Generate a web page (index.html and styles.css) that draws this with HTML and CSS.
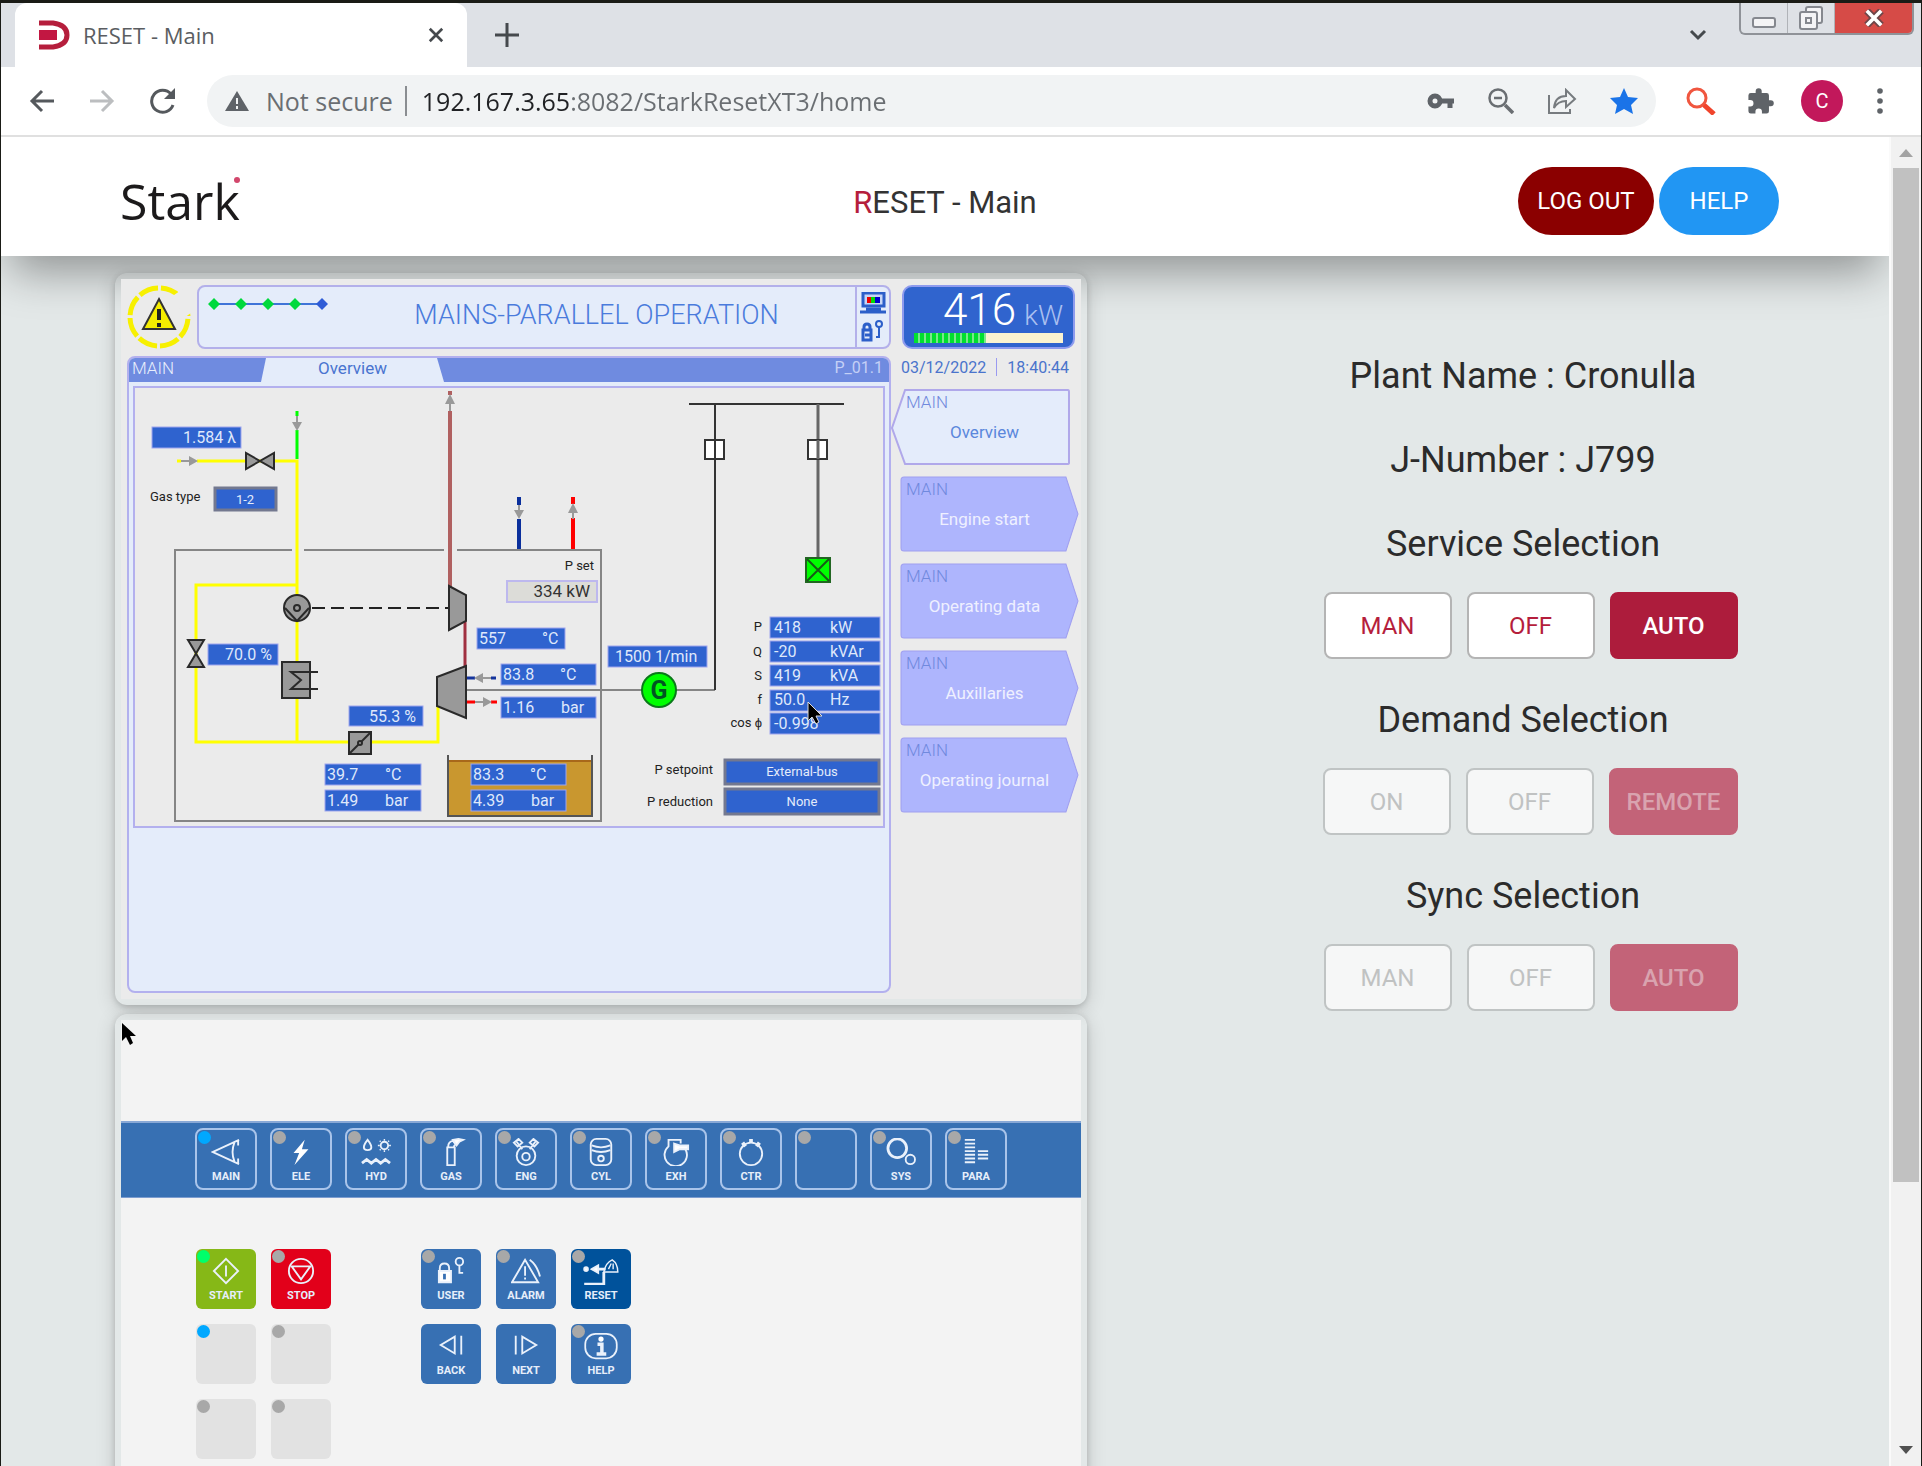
FILE: index.html
```html
<!DOCTYPE html>
<html lang="en">
<head>
<meta charset="utf-8">
<title>RESET - Main</title>
<meta name="viewport" content="width=device-width, initial-scale=1">
<link rel="stylesheet" href="styles.css">
</head>
<body>
<div class="window">
  <div class="tabstrip">
    <div class="tab">
      <svg class="favicon" width="32" height="30" viewBox="0 0 32 30"><path d="M1 3h14q14 2 14 12T15 27H1" fill="none" stroke="#b51e3c" stroke-width="5"/><path d="M1 10h18v10H1z" fill="#c21742"/></svg>
      <span class="tab-title">RESET - Main</span>
      <button class="icon-btn" aria-label="Close tab"><svg width="16" height="16" viewBox="0 0 18 18"><path d="M2 2l14 14M16 2L2 16" stroke="#45494d" stroke-width="3"/></svg></button>
    </div>
    <button class="icon-btn new-tab" aria-label="New tab"><svg width="24" height="24" viewBox="0 0 24 24"><path d="M12 0v24M0 12h24" stroke="#45494d" stroke-width="3"/></svg></button>
    <button class="icon-btn tab-search" aria-label="Search tabs"><svg width="18" height="12" viewBox="0 0 18 12"><path d="M2 2l7 7 7-7" fill="none" stroke="#45494d" stroke-width="3"/></svg></button>
    <div class="window-controls">
      <button class="wc" aria-label="Minimize"><svg class="wc-min" width="24" height="12" viewBox="0 0 24 12"><rect x="1" y="1" width="22" height="9" rx="2" fill="#f4f4f6" stroke="#85888f" stroke-width="2"/></svg></button>
      <button class="wc" aria-label="Restore"><svg width="26" height="26" viewBox="0 0 26 26" fill="#f4f4f6" stroke="#85888f" stroke-width="2"><rect x="8" y="2" width="16" height="16" rx="2"/><rect x="2" y="7" width="17" height="17" rx="2"/><rect x="8" y="13" width="5" height="5"/></svg></button>
      <button class="wc wc-close" aria-label="Close"><svg width="20" height="18" viewBox="0 0 22 20"><path d="M3 2l16 16M19 2L3 18" stroke="#6d4548" stroke-width="8"/><path d="M3 2l16 16M19 2L3 18" stroke="#fff" stroke-width="4"/></svg></button>
    </div>
  </div>
  <div class="toolbar">
    <div class="history">
      <button class="icon-btn" aria-label="Back"><svg width="26" height="24" viewBox="0 0 26 24"><path d="M25 12H3M13 2L3 12l10 10" fill="none" stroke="#55595d" stroke-width="3"/></svg></button>
      <button class="icon-btn" aria-label="Forward" disabled><svg width="26" height="24" viewBox="0 0 26 24"><path d="M1 12h22M13 2l10 10-10 10" fill="none" stroke="#bcbec0" stroke-width="3"/></svg></button>
      <button class="icon-btn" aria-label="Reload"><svg width="28" height="26" viewBox="0 0 28 26"><path d="M24 17A11 11 0 1 1 22 6" fill="none" stroke="#55595d" stroke-width="3"/><path d="M26 0v11H15z" fill="#55595d"/></svg></button>
    </div>
    <div class="omnibox">
      <svg width="24" height="20" viewBox="0 0 24 20"><path d="M12 0l12 20H0z" fill="#5f6368"/><path d="M12 7v6M12 15v3" stroke="#f1f3f4" stroke-width="2"/></svg>
      <span class="not-secure">Not secure</span>
      <input class="url" type="text" aria-label="Address" value="192.167.3.65:8082/StarkResetXT3/home">
      <svg width="28" height="16" viewBox="0 0 28 16"><circle cx="8" cy="8" r="5" fill="none" stroke="#5f6368" stroke-width="5"/><path d="M14 8h13M23 8v7" stroke="#5f6368" stroke-width="5"/></svg>
      <svg width="26" height="26" viewBox="0 0 26 26" fill="none" stroke="#6a6e72" stroke-width="2.5"><circle cx="10" cy="10" r="8.500"/><path d="M17 17l8 8" stroke-width="3.500"/><path d="M6 10h8"/></svg>
      <svg width="30" height="26" viewBox="0 0 30 26" fill="none" stroke="#777b7f" stroke-width="2"><path d="M2 7v18h21v-4"/><path d="M7 20q1-12 12-12V2l9 9-9 8v-6q-8 0-12 7z"/></svg>
      <svg width="28" height="26" viewBox="0 0 28 26"><path d="M14 0l4 9 10 1-7 7 2 9-9-5-9 5 2-9-7-7 10-1z" fill="#1a73e8"/></svg>
    </div>
    <svg width="30" height="28" viewBox="0 0 30 28" fill="none"><circle cx="11" cy="11" r="9" stroke="#f0563f" stroke-width="3"/><path d="M18 18l10 9" stroke="#f0442c" stroke-width="5"/></svg>
    <svg width="29" height="29" viewBox="0 0 24 24"><path d="M20.500 11H19V7a2 2 0 0 0-2-2h-4V3.500a2.500 2.500 0 0 0-5 0V5H4a2 2 0 0 0-2 2v3.800h1.500a2.700 2.700 0 0 1 0 5.400H2V20a2 2 0 0 0 2 2h3.800v-1.500a2.700 2.700 0 0 1 5.400 0V22H17a2 2 0 0 0 2-2v-4h1.500a2.500 2.500 0 0 0 0-5z" fill="#5f6368"/></svg>
    <button class="avatar" aria-label="Profile">C</button>
    <button class="icon-btn menu" aria-label="Menu"><svg width="6" height="26" viewBox="0 0 6 26" fill="#5f6368"><circle cx="3" cy="3" r="2.800"/><circle cx="3" cy="13" r="2.800"/><circle cx="3" cy="23" r="2.800"/></svg></button>
  </div>

  <div class="viewport">
    <div class="page">
      <header class="site-header">
        <a class="logo" href="#">Stark<i class="logo-dot"></i></a>
        <h1 class="page-title"><span class="accent">R</span>ESET - Main</h1>
        <div class="header-actions">
          <button class="pill pill-logout">LOG OUT</button>
          <button class="pill pill-help">HELP</button>
        </div>
      </header>
      <main class="content">
        <div class="left">
          <section class="card">
            <div class="hmi">
              <div class="hmi-left">
                <div class="hmi-head">
                  <svg class="alarm" width="66" height="64" viewBox="0 0 66 64"><circle cx="32" cy="32" r="29" fill="none" stroke="#f7f000" stroke-width="5" stroke-dasharray="20 3" pathLength="184" stroke-dashoffset="-2"/><path d="M50 8l14 20" stroke="#ebebeb" stroke-width="14"/><path d="M32 14l16 30H16z" fill="#f5ec00" stroke="#333" stroke-width="2"/><path d="M32 24v11M32 38v4" stroke="#222" stroke-width="4"/></svg>
                  <div class="banner">
                    <svg class="steps" width="120" height="14" viewBox="0 0 120 14"><path d="M6 7h108" stroke="#3f74d8" stroke-width="2"/><g fill="#00d93c"><path d="M0 7l6-6 6 6-6 6zM27 7l6-6 6 6-6 6zM54 7l6-6 6 6-6 6zM81 7l6-6 6 6-6 6z"/></g><path d="M108 7l6-6 6 6-6 6z" fill="#2f5cd6"/></svg>
                    <span class="banner-text">MAINS-PARALLEL OPERATION</span>
                    <div class="banner-icons">
                      <svg width="26" height="22" viewBox="0 0 26 22"><rect x="3" y="1" width="21" height="13" fill="#c7d6f6" stroke="#2c5fc9" stroke-width="3"/><path d="M7 5h4v6H7z" fill="#e00"/><path d="M11 5h4v6h-4z" fill="#0d0"/><path d="M15 5h5v6h-5z" fill="#00c"/><path d="M0 20h26M6 17h15" stroke="#2c5fc9" stroke-width="3"/></svg>
                      <svg width="24" height="22" viewBox="0 0 24 22" fill="none" stroke="#2c5fc9" stroke-width="3"><path d="M3 10V7q0-3 3-3t3 3v3"/><path d="M2 10h8v10H2zM4 15h5"/><circle cx="18" cy="4" r="3" stroke-width="2"/><path d="M18 7v11M18 17h-3" stroke-width="2"/></svg>
                    </div>
                  </div>
                </div>
                <div class="frame">
                  <div class="frame-tabs">
                    <span class="frame-main">MAIN</span>
                    <span class="frame-tab">Overview</span>
                    <span class="frame-code">P_01.1</span>
                  </div>
                  <div class="diagram">
                  <svg viewBox="136 388 748 438" role="img" aria-label="Plant overview">
                    <g fill="none" stroke="#858585" stroke-width="2"><path d="M293 550H176V821H602V550H458M445 550H305"/><path d="M467 690H716"/></g>
                    <g fill="none" stroke="#333" stroke-width="2"><path d="M690 404H845M716 404V690"/><path d="M819 404V560" stroke="#666" stroke-width="3"/></g>
                    <g fill="none" stroke="#ff0" stroke-width="3"><path d="M178 461H298V742M298 585H197V742H439V702"/></g>
                    <path d="M298 411V459" stroke="#0f0" stroke-width="3"/>
                    <path d="M451 391V588" stroke="#b06060" stroke-width="4"/>
                    <path d="M466 620V668" stroke="#a03040" stroke-width="3"/>
                    <path d="M520 497V549" stroke="#0a2f9c" stroke-width="4"/>
                    <path d="M574 497V549" stroke="#f00" stroke-width="4"/>
                    <path d="M467 678H497" stroke="#15349c" stroke-width="3"/>
                    <path d="M467 702H498" stroke="#f00" stroke-width="3"/>
                    <path d="M313 608H450" stroke="#222" stroke-width="2" stroke-dasharray="13 6"/>
                    <g stroke="#ebebeb" stroke-width="4"><path d="M298 416v14M451 395v16M520 505v14M574 504v14M182 461h16M476 678h16M476 702h16"/></g>
                    <g fill="#999"><path d="M297 416h2v6h4l-5 9-5-9h4zM450 411h2v-7h4l-5-10-5 10h4zM519 505h2v5h4l-5 9-5-9h4zM573 519h2v-6h4l-5-10-5 10h4zM182 460h8v-4l9 5-9 5v-4h-8zM492 677h-8v-4l-9 5 9 5v-4h8zM476 701h8v-4l9 5-9 5v-4h-8z"/></g>
                    <g fill="#999" stroke="#2a2a2a" stroke-width="2">
                      <path d="M247 453v16l28-16v16z"/>
                      <path d="M189 640h16l-16 27h16z"/>
                      <path d="M450 586l17 9v26l-17 9z"/>
                      <path d="M438 677l29-11v52l-29-12z"/>
                      <circle cx="298" cy="608" r="13"/><path d="M286 608l12 13 12-13" fill="none"/><circle cx="298" cy="608" r="3"/>
                      <path d="M283 662h28v36h-28z"/><path d="M319 672h-27l10 8-10 9h27" fill="none"/>
                      <path d="M350 732h22v22h-22z"/><path d="M350 754l22-22" fill="none"/><circle cx="361" cy="743" r="2"/>
                    </g>
                    <path d="M449 761h144v54H449z" fill="#c9972f"/><path d="M449 761h144" stroke="#a8681a" stroke-width="2"/><path d="M449 755v61h144v-61" fill="none" stroke="#555" stroke-width="2"/>
                    <g fill="#fff" stroke="#333" stroke-width="2"><rect x="706" y="440" width="19" height="19"/><rect x="809" y="440" width="19" height="19"/></g>
                    <path d="M716 440v19" stroke="#333" stroke-width="2"/><path d="M819 440v19" stroke="#666" stroke-width="3"/>
                    <rect x="807" y="558" width="24" height="24" fill="#0f0" stroke="#262" stroke-width="2"/><path d="M808 559l22 22M830 559l-22 22" stroke="#175a17" stroke-width="2"/>
                    <circle cx="660" cy="690" r="17" fill="#0f0" stroke="#0b7a1a" stroke-width="2"/>
                    <text class="d-gen" x="660" y="699">G</text>
                    <g class="d-field">
                      <rect x="153" y="427" width="89" height="21"/><rect x="209" y="644" width="70" height="21"/><rect x="350" y="706" width="74" height="20"/>
                      <rect x="326" y="764" width="96" height="21"/><rect x="326" y="790" width="96" height="21"/>
                      <rect x="472" y="764" width="95" height="21"/><rect x="472" y="790" width="95" height="21"/>
                      <rect x="478" y="628" width="88" height="21"/><rect x="502" y="664" width="95" height="21"/><rect x="502" y="697" width="95" height="21"/>
                      <rect x="609" y="646" width="99" height="21"/>
                      <rect x="771" y="617" width="110" height="21"/><rect x="771" y="641" width="110" height="21"/><rect x="771" y="665" width="110" height="21"/><rect x="771" y="690" width="110" height="21"/><rect x="771" y="713" width="110" height="21"/>
                    </g>
                    <rect class="d-pset" x="508" y="581" width="90" height="21"/>
                    <g class="d-select"><rect x="216" y="488" width="61" height="22"/><rect x="726" y="760" width="154" height="24"/><rect x="726" y="789" width="154" height="25"/></g>
                    <g class="d-val end"><text x="237" y="443">1.584 λ</text><text x="273" y="660">70.0 %</text><text x="417" y="722">55.3 %</text></g>
                    <g class="d-val">
                      <text x="328" y="780">39.7</text><text x="386" y="780">°C</text><text x="328" y="806">1.49</text><text x="386" y="806">bar</text>
                      <text x="474" y="780">83.3</text><text x="531" y="780">°C</text><text x="474" y="806">4.39</text><text x="532" y="806">bar</text>
                      <text x="480" y="644">557</text><text x="543" y="644">°C</text><text x="504" y="680">83.8</text><text x="561" y="680">°C</text><text x="504" y="713">1.16</text><text x="562" y="713">bar</text>
                      <text x="616" y="662">1500 1/min</text>
                      <text x="775" y="633">418</text><text x="831" y="633">kW</text><text x="775" y="657">-20</text><text x="831" y="657">kVAr</text><text x="775" y="681">419</text><text x="831" y="681">kVA</text><text x="775" y="705">50.0</text><text x="831" y="705">Hz</text><text x="775" y="729">-0.998</text>
                    </g>
                    <text class="d-dark" x="591" y="597">334 kW</text>
                    <g class="d-small mid"><text x="246" y="504">1-2</text><text x="803" y="776">External-bus</text><text x="803" y="806">None</text></g>
                    <text class="d-label" x="151" y="501">Gas type</text>
                    <g class="d-label end"><text x="595" y="570">P set</text><text x="763" y="631">P</text><text x="763" y="656">Q</text><text x="763" y="680">S</text><text x="763" y="704">f</text><text x="763" y="727">cos ϕ</text><text x="714" y="774">P setpoint</text><text x="714" y="806">P reduction</text></g>
                    <path d="M809 702v19l4-4 4 7 3-2-3-6h6z" fill="#000" stroke="#ddd" stroke-width="1"/>
                  </svg>
                  </div>
                </div>
              </div>
              <div class="hmi-right">
                <div class="load">
                  <div class="load-value">416<small>kW</small></div>
                  <div class="load-bar"><i style="width:48%"></i></div>
                </div>
                <div class="stamp"><span>03/12/2022</span><i></i><span>18:40:44</span></div>
                <nav class="hmi-nav">
                  <button class="nav-btn nav-current"><svg viewBox="0 0 178 76" preserveAspectRatio="none"><path d="M14 1h162q1 0 1 2v71q0 1-2 1H14L1 39z" fill="#e4ecfb" stroke="#b0a8ea" stroke-width="2"/></svg><span class="nav-top">MAIN</span><span class="nav-label">Overview</span></button>
                  <button class="nav-btn"><svg viewBox="0 0 178 76" preserveAspectRatio="none"><path d="M4 1h161l12 37-12 37H4q-3 0-3-3V4q0-3 3-3z" fill="#aeb5fd" stroke="#a09ff0" stroke-width="1"/></svg><span class="nav-top">MAIN</span><span class="nav-label">Engine start</span></button>
                  <button class="nav-btn"><svg viewBox="0 0 178 76" preserveAspectRatio="none"><path d="M4 1h161l12 37-12 37H4q-3 0-3-3V4q0-3 3-3z" fill="#aeb5fd" stroke="#a09ff0" stroke-width="1"/></svg><span class="nav-top">MAIN</span><span class="nav-label">Operating data</span></button>
                  <button class="nav-btn"><svg viewBox="0 0 178 76" preserveAspectRatio="none"><path d="M4 1h161l12 37-12 37H4q-3 0-3-3V4q0-3 3-3z" fill="#aeb5fd" stroke="#a09ff0" stroke-width="1"/></svg><span class="nav-top">MAIN</span><span class="nav-label">Auxillaries</span></button>
                  <button class="nav-btn"><svg viewBox="0 0 178 76" preserveAspectRatio="none"><path d="M4 1h161l12 37-12 37H4q-3 0-3-3V4q0-3 3-3z" fill="#aeb5fd" stroke="#a09ff0" stroke-width="1"/></svg><span class="nav-top">MAIN</span><span class="nav-label">Operating journal</span></button>
                </nav>
              </div>
            </div>
          </section>

          <section class="card">
            <div class="keypad">
              <svg class="pointer" width="16" height="26" viewBox="0 0 16 26"><path d="M1 3v18l4-4 4 8 3-2-3-7h6z" fill="#000"/></svg>
              <div class="band">
                <button class="key outline"><i class="led blue"></i><svg viewBox="0 0 32 30"><path d="M30 2L2 15l28 13M25 5q-4 10 0 20M29 3v5M29 22v5"/></svg>MAIN</button>
                <button class="key outline"><i class="led"></i><svg viewBox="0 0 32 30"><path d="M20 2L8 16h6l-5 13 15-17h-7z" fill="#fff" stroke="none"/></svg>ELE</button>
                <button class="key outline"><i class="led"></i><svg viewBox="0 0 32 30"><path d="M7 2q-4 5-4 8t4 3 4-3-4-8z"/><circle cx="25" cy="8" r="4"/><path d="M25 1v2M25 13v2M18 8h2M30 8h2M20 3l1 1M29 12l1 1M30 3l-1 1M21 12l-1 1" stroke-width="1.500"/><path d="M1 27l5-4 5 4 5-4 5 4 5-4 5 4" stroke-width="3"/></svg>HYD</button>
                <button class="key outline"><i class="led"></i><svg viewBox="0 0 32 30"><path d="M12 10h8v19h-8zM13 9q0-5 5-6l3 4q-2 1-2 3"/><path d="M18 2l4 6 3-4 4-2-5-1z" fill="#fff"/></svg>GAS</button>
                <button class="key outline"><i class="led"></i><svg viewBox="0 0 32 30"><circle cx="16" cy="19" r="10"/><path d="M6 4l6 8M26 4l-6 8M3 5l5-4 4 4-5 4zM29 5l-5-4-4 4 5 4z"/><circle cx="16" cy="20" r="4"/></svg>ENG</button>
                <button class="key outline"><i class="led"></i><svg viewBox="0 0 32 30"><rect x="5" y="1" width="22" height="28" rx="6"/><path d="M6 8q10 4 20 0M6 13q10 4 20 0"/><circle cx="16" cy="22" r="3"/></svg>CYL</button>
                <button class="key outline"><i class="led"></i><svg viewBox="0 0 32 30"><path d="M26 12a12 12 0 1 1-18-3V2h13v4"/><path d="M14 6l6 2h9v4h-9l-6 3z" fill="#fff"/></svg>EXH</button>
                <button class="key outline"><i class="led"></i><svg viewBox="0 0 32 30"><circle cx="16" cy="17" r="12"/><path d="M7 5l3 4M16 1v4M25 5l-3 4" stroke-width="4"/></svg>CTR</button>
                <button class="key outline" aria-label="Unassigned"><i class="led"></i></button>
                <button class="key outline"><i class="led"></i><svg viewBox="0 0 32 30"><circle cx="12" cy="11" r="10" stroke-width="3"/><circle cx="26" cy="23" r="5"/></svg>SYS</button>
                <button class="key outline"><i class="led"></i><svg viewBox="0 0 32 30"><path d="M4 2h11M4 6h11M4 10h11M4 14h11M4 18h11M4 22h11M4 26h11M18 14h11M18 18h11M18 22h11"/></svg>PARA</button>
              </div>
              <div class="pads">
                <div class="pad-group">
                  <button class="key green"><i class="led lime"></i><svg viewBox="0 0 32 30"><path d="M16 2l13 13-13 13L3 15zM16 9v12"/></svg>START</button>
                  <button class="key red"><i class="led"></i><svg viewBox="0 0 32 30"><circle cx="16" cy="15" r="13"/><path d="M6 10h20l-10 14z"/></svg>STOP</button>
                  <button class="key blank" aria-label="Unassigned"><i class="led blue"></i></button>
                  <button class="key blank" aria-label="Unassigned"><i class="led"></i></button>
                  <button class="key blank" aria-label="Unassigned"><i class="led"></i></button>
                  <button class="key blank" aria-label="Unassigned"><i class="led"></i></button>
                </div>
                <div class="pad-group pad-wide">
                  <button class="key"><i class="led"></i><svg viewBox="0 0 32 30"><path d="M4 15v-3q0-5 5-5t5 5v3"/><path d="M3 15h13v12H3z" fill="#fff"/><path d="M9 18v6" stroke="#3770b3" stroke-width="3"/><circle cx="25" cy="5" r="4"/><path d="M25 9v9M25 17h4"/></svg>USER</button>
                  <button class="key"><i class="led"></i><svg viewBox="0 0 32 30"><path d="M15 3L1 27h28zM15 10v10M15 22v2M20 3q8 6 11 18"/></svg>ALARM</button>
                  <button class="key navy"><i class="led"></i><svg class="wide" viewBox="0 0 38 30"><path d="M1 29h21V16" stroke-width="3"/><path d="M12 13h12" stroke-width="3"/><circle cx="3" cy="13" r="2" fill="#fff"/><path d="M9 13l7-4v8z" fill="#fff"/><path d="M22 16q2-10 9-13 6 4 6 13zM30 7l-3 6M32 7v6" stroke-width="1.500"/></svg>RESET</button>
                  <button class="key"><svg viewBox="0 0 32 30"><path d="M20 5v18L5 14zM27 4v20"/></svg>BACK</button>
                  <button class="key"><svg viewBox="0 0 32 30"><path d="M12 5v18l15-9zM5 4v20"/></svg>NEXT</button>
                  <button class="key"><i class="led"></i><svg class="wide" viewBox="0 0 40 32"><rect x="2" y="2" width="36" height="28" rx="12"/><circle cx="20" cy="8" r="3" fill="#fff" stroke="none"/><path d="M16 14h5v11M15 25h11" stroke-width="4"/></svg>HELP</button>
                </div>
              </div>
            </div>
          </section>
        </div>

        <aside class="right">
          <h2>Plant Name : Cronulla</h2>
          <h2>J-Number : J799</h2>
          <h2>Service Selection</h2>
          <div class="choices"><button class="choice">MAN</button><button class="choice">OFF</button><button class="choice selected">AUTO</button></div>
          <h2>Demand Selection</h2>
          <div class="choices"><button class="choice" disabled>ON</button><button class="choice" disabled>OFF</button><button class="choice selected" disabled>REMOTE</button></div>
          <h2>Sync Selection</h2>
          <div class="choices"><button class="choice" disabled>MAN</button><button class="choice" disabled>OFF</button><button class="choice selected" disabled>AUTO</button></div>
        </aside>
      </main>
    </div>
    <div class="scrollbar">
      <svg width="14" height="8" viewBox="0 0 14 8"><path d="M7 0l7 8H0z" fill="#a3a3a3"/></svg>
      <div class="track"><div class="thumb"></div></div>
      <svg width="14" height="8" viewBox="0 0 14 8"><path d="M7 8l7-8H0z" fill="#505050"/></svg>
    </div>
  </div>
</div>
</body>
</html>
```
FILE: styles.css
```css
* { box-sizing: border-box; }

body {
  margin: 0;
  background: #1a1b16;
  font-family: Roboto, "Liberation Sans", sans-serif;
}

button {
  font-family: inherit;
  border: 0;
  padding: 0;
  background: none;
  cursor: pointer;
}

svg { display: block; flex: none; }

/* Browser window */
.window {
  display: flex;
  flex-direction: column;
  height: 100vh;
  padding: 3px 1px 0;
  overflow: hidden;
}

.tabstrip {
  display: flex;
  align-items: center;
  height: 64px;
  flex: none;
  padding-left: 14px;
  background: #dee1e6;
  font-family: "Open Sans", "Noto Sans", sans-serif;
}

.tab {
  display: flex;
  align-items: center;
  width: 452px;
  height: 64px;
  padding: 0 23px;
  border-radius: 12px 12px 0 0;
  background: #fff;
}

.tab-title {
  flex: 1;
  padding-left: 13px;
  color: #5a5d61;
  font-size: 22px;
}

.icon-btn { display: flex; flex: none; }
.new-tab { margin-left: 28px; }
.tab-search { margin-left: auto; margin-right: 32px; }

.window-controls {
  display: flex;
  align-self: flex-start;
  height: 32px;
  margin-right: 7px;
  border: 2px solid #8f9298;
  border-top: 0;
  border-radius: 0 0 6px 6px;
  overflow: hidden;
}

.wc {
  display: flex;
  align-items: center;
  justify-content: center;
  width: 47px;
  border-right: 1px solid #b0b3b8;
}

.wc-min { align-self: flex-end; margin-bottom: 4px; }
.wc-close { width: 77px; border: 0; background: #d64b47; }

.toolbar {
  display: flex;
  align-items: center;
  gap: 30px;
  height: 70px;
  flex: none;
  padding: 0 38px 0 28px;
  border-bottom: 2px solid #e0e0e0;
  background: #fff;
  font-family: "Open Sans", "Noto Sans", sans-serif;
}

.history { display: flex; align-items: center; gap: 34px; }

.omnibox {
  display: flex;
  align-items: center;
  gap: 33px;
  flex: 1;
  height: 52px;
  padding: 0 18px;
  border-radius: 26px;
  background: #f1f3f4;
}

.not-secure {
  margin-left: -16px;
  padding-right: 12px;
  border-right: 2px solid #8a8d91;
  color: #6a6e72;
  font-size: 25px;
  line-height: 30px;
}

.url {
  flex: 1;
  min-width: 0;
  margin-left: -18px;
  padding: 0;
  border: 0;
  outline: 0;
  background: linear-gradient(90deg, #202124 148px, #6a6e72 148px);
  background-clip: text;
  -webkit-background-clip: text;
  color: transparent;
  font: 25px/34px "Open Sans", "Noto Sans", sans-serif;
}

.avatar {
  width: 42px;
  height: 42px;
  margin-left: -4px;
  border-radius: 50%;
  background: #c2185b;
  color: #fff;
  font: 20px Roboto, sans-serif;
}

.menu { margin-left: 4px; }

/* Page */
.viewport {
  display: flex;
  flex: 1;
  min-height: 0;
  background: #e3e8e8;
}

.page { flex: 1; min-width: 0; overflow: hidden; }

.site-header {
  display: grid;
  grid-template-columns: 1fr auto 1fr;
  align-items: center;
  height: 119px;
  padding: 8px 110px 0;
  background: #fff;
  box-shadow: 0 26px 44px -10px rgba(0, 0, 0, 0.36);
}

.logo {
  position: relative;
  justify-self: start;
  margin-left: 9px;
  color: #1c1a1b;
  font: 50px/64px "Open Sans", "Noto Sans", sans-serif;
  text-decoration: none;
}

.logo-dot {
  position: absolute;
  top: 8px;
  right: 0;
  width: 6px;
  height: 6px;
  border-radius: 50%;
  background: #d2476c;
}

.page-title {
  margin: 4px 0 0;
  color: #333;
  font-size: 31px;
  font-weight: 400;
}

.accent { color: #b51e3c; }

.header-actions { display: flex; justify-content: flex-end; gap: 5px; }

.pill {
  height: 68px;
  border-radius: 34px;
  color: #fff;
  font-size: 24px;
  white-space: nowrap;
}

.pill-logout { width: 136px; background: #8b0000; }
.pill-help { width: 120px; background: #2196f3; }

.content {
  display: grid;
  grid-template-columns: minmax(0, 972fr) minmax(0, 732fr);
  column-gap: 70px;
  padding: 17px 0 0 114px;
}

.left { display: flex; flex-direction: column; gap: 9px; }

.card {
  padding: 6px;
  border-radius: 12px;
  box-shadow: 0 2px 6px rgba(0, 0, 0, 0.16), 0 4px 20px rgba(0, 0, 0, 0.16);
}

/* HMI screen */
.hmi {
  display: grid;
  grid-template-columns: minmax(0, 764fr) minmax(0, 190fr);
  min-height: 720px;
  padding: 6px 0 6px 6px;
  background: #ebebeb;
}

.hmi-left { display: flex; flex-direction: column; gap: 7px; }
.hmi-head { display: flex; gap: 4px; }

.banner {
  display: flex;
  flex: 1;
  border: 2px solid #b3b0ea;
  border-radius: 8px;
  background: #e4ecfa;
  color: #4a7bdc;
}

.steps { margin: 10px 0 0 9px; }

.banner-text {
  flex: 1;
  align-self: center;
  padding: 0 0 5px 10px;
  font-size: 27px;
  font-weight: 300;
  text-align: center;
  white-space: nowrap;
}

.banner-icons {
  display: flex;
  flex-direction: column;
  align-items: center;
  justify-content: space-evenly;
  width: 34px;
  border-left: 2px solid #b3b0ea;
}

.frame {
  flex: 1;
  border: 2px solid #b3b0ee;
  border-radius: 8px;
  background: #e4ecfa;
  overflow: hidden;
}

.frame-tabs {
  display: flex;
  height: 24px;
  padding-right: 6px;
  background: #6f8be0;
  color: #e8eefc;
  font-size: 17px;
  line-height: 20px;
}

.frame-main { width: 132px; padding-left: 3px; font-weight: 300; }

.frame-tab {
  width: 183px;
  background: #e4ecfa;
  clip-path: polygon(5px 0, 176px 0, 100% 100%, 0 100%);
  color: #4a74d0;
  text-align: center;
}

.frame-code { margin-left: auto; color: #c4d0f6; font-size: 16px; }

.diagram {
  margin: 4px 4px 0;
  border: 2px solid #b3b0ee;
  background: #ebebeb;
}

.diagram svg { width: 100%; height: auto; }

.d-field rect { fill: #2f63cf; stroke: #9fa6ee; stroke-width: 1; }
.d-pset { fill: #dcdcd8; stroke: #bdb8ee; stroke-width: 2; }
.d-select rect { fill: #2f63cf; stroke: #73788f; stroke-width: 3; }
.d-val { fill: #dfe8fb; font-size: 16px; }
.d-dark { fill: #333; font-size: 17px; text-anchor: end; }
.d-small { fill: #e4ecfb; font-size: 13px; }
.d-label { fill: #222; font-size: 13px; }
.d-gen { fill: #052; font-size: 25px; font-weight: 700; text-anchor: middle; }
.end { text-anchor: end; }
.mid { text-anchor: middle; }

.load {
  height: 64px;
  margin: 0 6px 0 11px;
  padding: 0 10px;
  border: 2px solid #8e9bee;
  border-radius: 10px;
  background: #3064ce;
}

.load-value {
  height: 46px;
  color: #fff;
  font-size: 44px;
  font-weight: 300;
  line-height: 46px;
  text-align: right;
  white-space: nowrap;
}

.load-value small { margin-left: 8px; color: #a9bff0; font-size: 28px; }

.load-bar { height: 10px; background: #fbf3d0; }

.load-bar i {
  display: block;
  height: 100%;
  background: repeating-linear-gradient(90deg, #00e030 0 4px, #7be88c 4px 6px);
}

.stamp {
  display: flex;
  align-items: center;
  justify-content: space-between;
  height: 24px;
  margin: 6px 12px 10px 10px;
  color: #4a74cc;
  font-size: 16px;
}

.stamp i { width: 1px; height: 18px; background: #9a9af0; }

.hmi-nav { display: flex; flex-direction: column; gap: 11px; }

.nav-btn {
  display: grid;
  justify-items: center;
  grid-template-columns: 1fr;
  grid-template-rows: 26px 34px 16px;
  width: 179px;
  height: 76px;
  margin-left: 9px;
  color: #eef0ff;
  font-size: 17px;
}

.nav-btn svg { grid-area: 1 / 1 / 4 / 2; width: 100%; height: 76px; }
.nav-top { grid-area: 1 / 1; justify-self: start; align-self: center; padding-left: 6px; color: #7089dd; font-weight: 300; }
.nav-label { grid-area: 2 / 1; align-self: center; padding-right: 10px; }
.nav-current { margin-left: 0; color: #5b87dc; }
.nav-current .nav-top { padding-left: 15px; }
.nav-current .nav-label { padding: 0 0 0 8px; }

/* Operator keypad */
.keypad { min-height: 560px; background: #f3f3f3; }
.pointer { height: 101px; padding-bottom: 75px; }

.band {
  display: flex;
  gap: 13px;
  padding: 5px 0 7px 74px;
  border-top: 2px solid #88a8d6;
  border-bottom: 1px solid #7c9ccf;
  background: #3770b3;
}

.pads { display: flex; gap: 90px; padding: 51px 0 0 75px; }

.pad-group {
  display: grid;
  grid-template-columns: repeat(2, 60px);
  gap: 15px;
  align-content: start;
}

.pad-wide { grid-template-columns: repeat(3, 60px); }

.key {
  position: relative;
  display: flex;
  flex-direction: column;
  align-items: center;
  gap: 4px;
  width: 60px;
  height: 60px;
  padding-top: 8px;
  border-radius: 6px;
  background: #3770b3;
  color: #e6eefa;
  font-size: 11px;
  font-weight: 700;
  line-height: 14px;
}

.key svg {
  width: 30px;
  height: 28px;
  fill: none;
  stroke: #eaf1fb;
  stroke-width: 2;
}

.key svg.wide { width: 38px; }

.outline {
  width: 62px;
  height: 62px;
  border: 2px solid #a9c4ea;
  border-radius: 8px;
}

.green { background: #86b817; }
.red { background: #e2001a; }
.navy { background: #00529b; }
.blank { background: #e2e2e2; }

.led {
  position: absolute;
  top: 1px;
  left: 1px;
  width: 13px;
  height: 13px;
  border-radius: 50%;
  background: #a8a8a8;
}

.blue { background: #00a8ff; }
.lime { background: #00ff6a; }

/* Plant controls */
.right {
  display: flex;
  flex-direction: column;
  align-items: center;
  padding-top: 82px;
}

h2 {
  margin: 0 0 42px;
  color: #2b2b2b;
  font-size: 36px;
  font-weight: 400;
  line-height: 42px;
}

.choices {
  display: flex;
  gap: 15px;
  margin: -15px 0 40px;
  padding-left: 15px;
}

.choice {
  min-width: 128px;
  height: 67px;
  padding: 0 18px;
  border: 2px solid #b4b4b4;
  border-radius: 8px;
  background: #fff;
  color: #b51e3c;
  font-size: 24px;
}

.selected { padding: 0 16px; border-color: #ad1c3c; background: #ad1c3c; color: #fff; font-weight: 500; }
.choice:disabled { border-color: #c0c4c4; background: #f6f7f7; color: #c0c2c2; }
.selected:disabled { border-color: #c36378; background: #c36378; color: #d9a3af; }

/* Scrollbar */
.scrollbar {
  display: flex;
  flex-direction: column;
  align-items: center;
  gap: 11px;
  width: 32px;
  padding: 12px 0;
  border-left: 2px solid #fafafa;
  background: #f1f1f1;
}

.track { flex: 1; align-self: stretch; padding: 0 2px; }
.thumb { height: 80%; background: #c1c1c1; }
```
